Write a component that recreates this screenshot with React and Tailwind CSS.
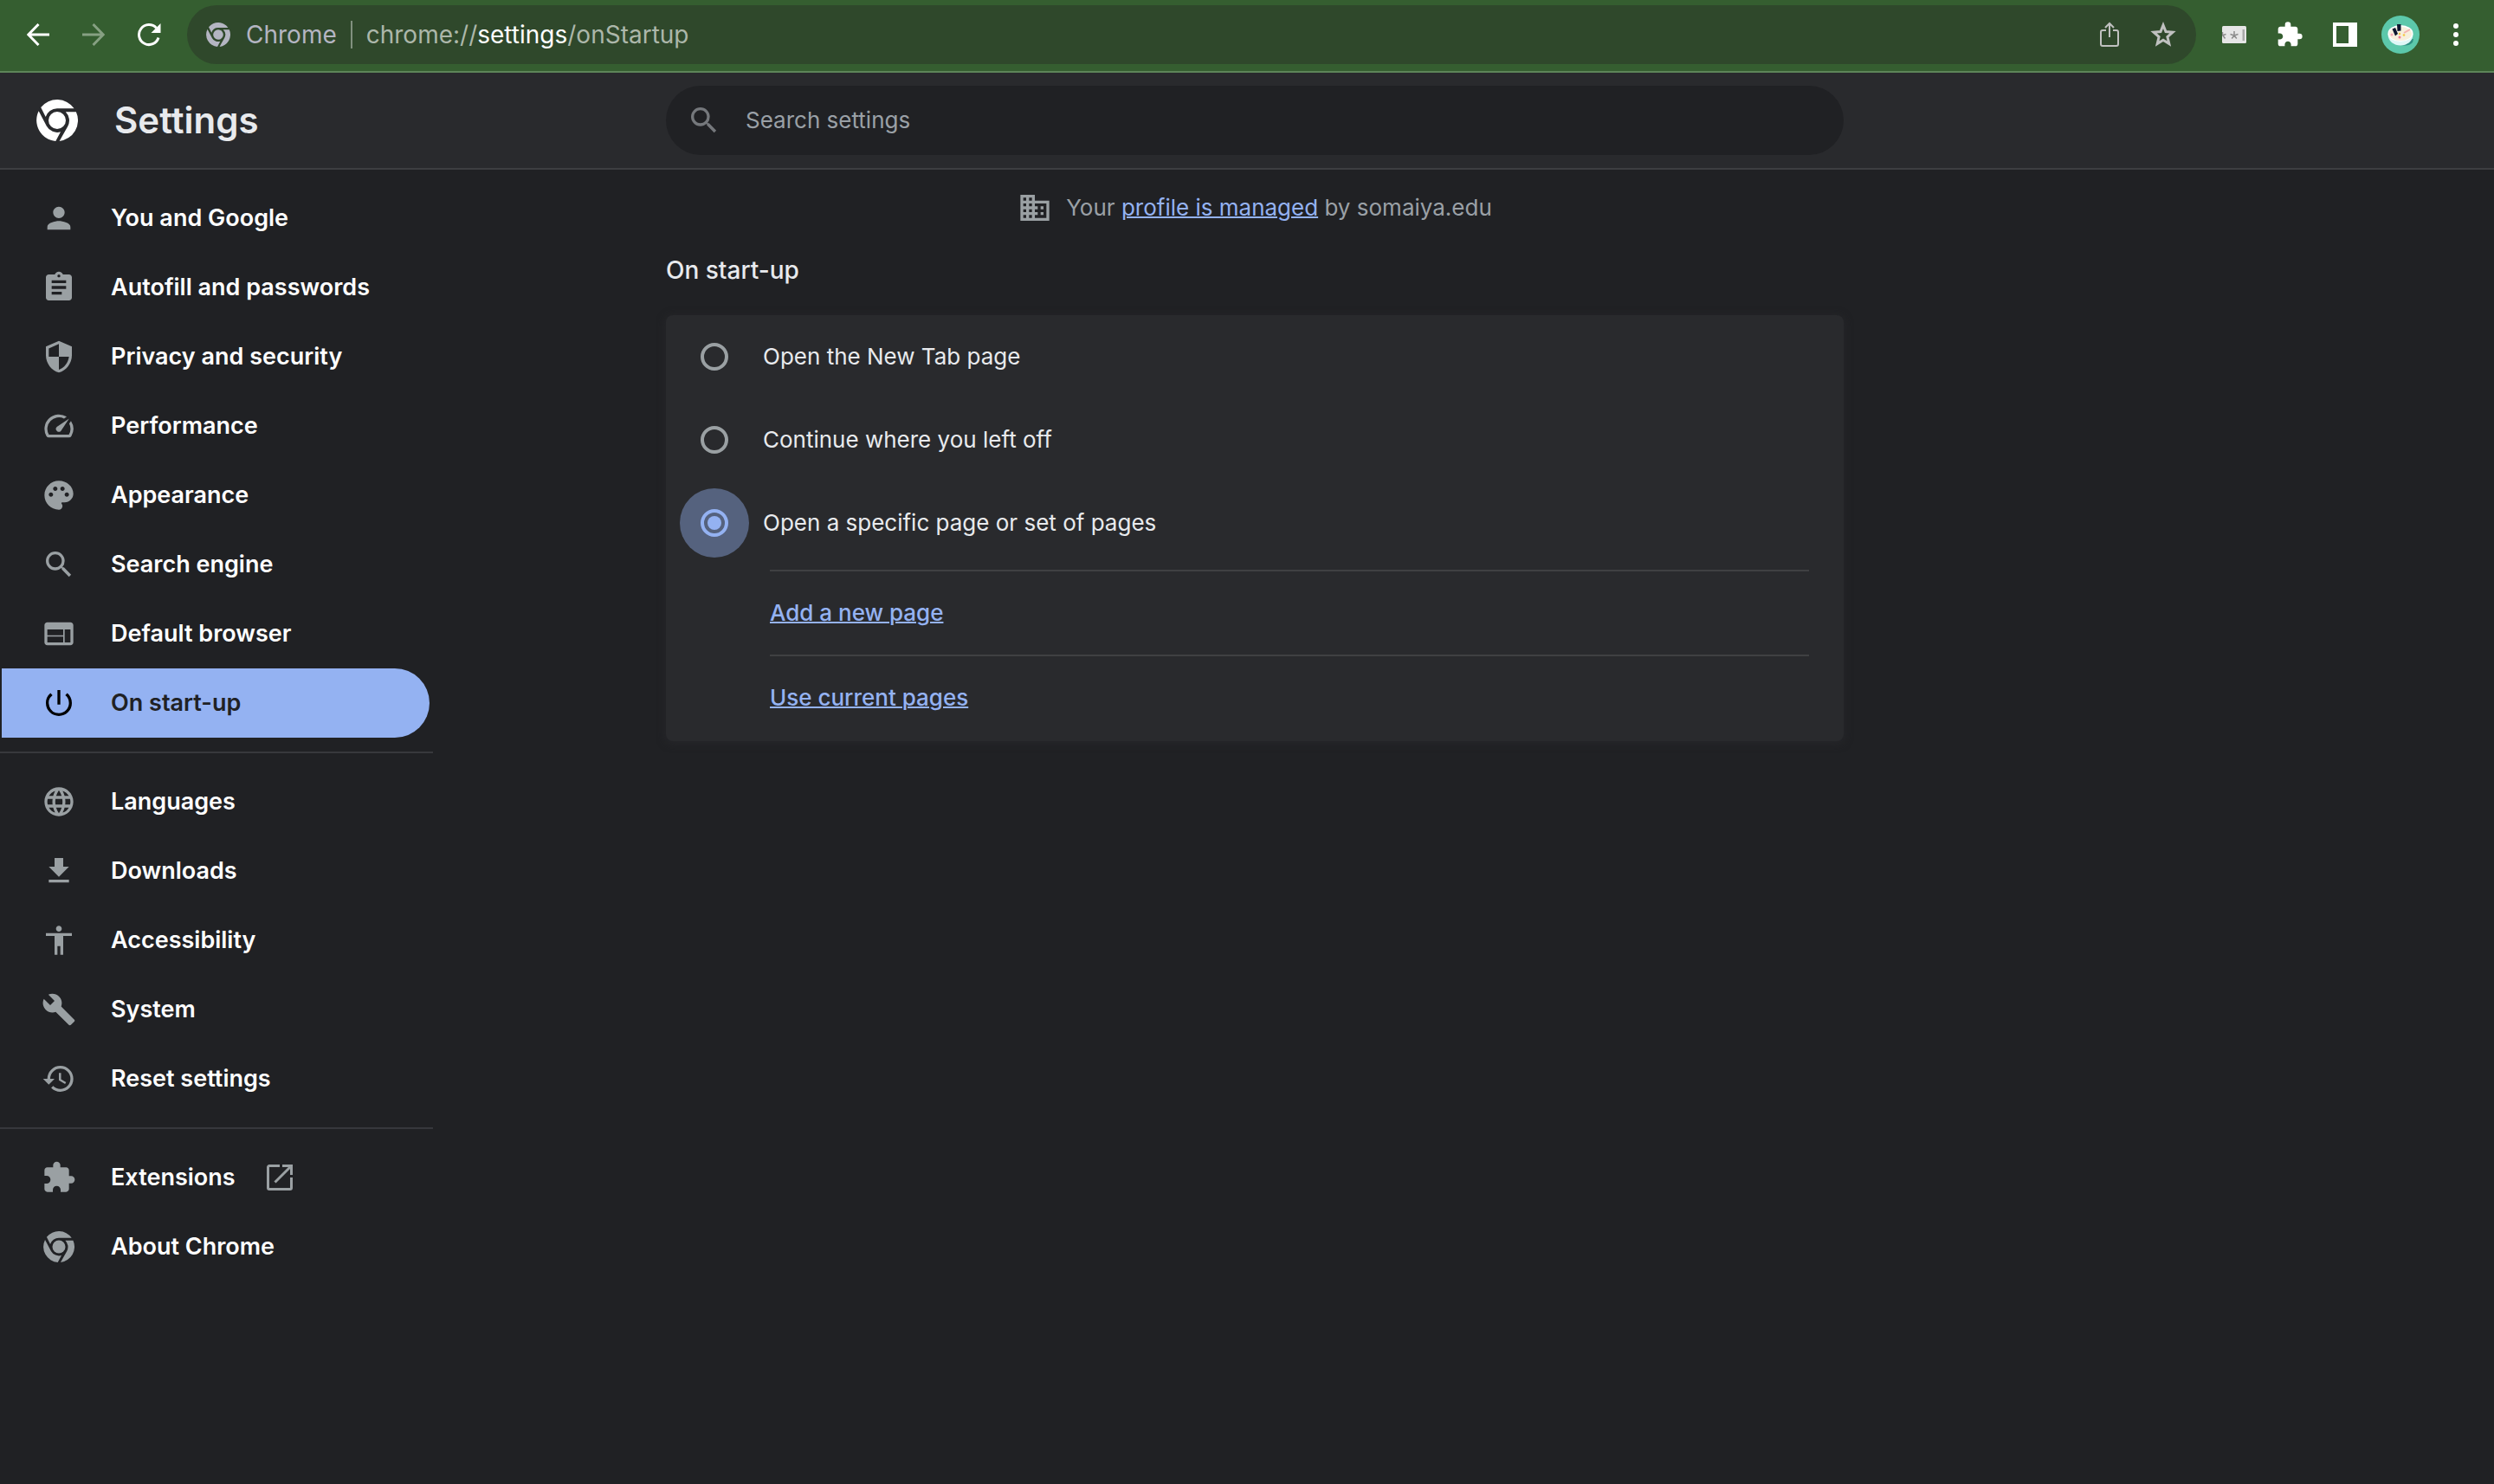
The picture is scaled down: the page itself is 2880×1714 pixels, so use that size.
import React, { useState } from "react";
import {
  MdPerson, MdAssignment, MdSpeed, MdPalette, MdSearch, MdWeb, MdPowerSettingsNew,
  MdLanguage, MdAccessibility, MdBuild, MdExtension, MdDomain,
} from "react-icons/md";

function ChromeMark({ className }) {
  return (
    <svg viewBox="0 0 48 48" className={className} fill="currentColor" aria-hidden="true">
      <circle cx="24" cy="24" r="10" />
      <path d="M5.2 9.1A24 24 0 0 1 43.6 10.2L24 10.2A13.9 13.9 0 0 0 10.7 20.1z" />
      <path d="M45.9 14.2A24 24 0 0 1 26.6 47.9L36.2 30.9A13.9 13.9 0 0 0 33.8 14.2z" />
      <path d="M2.7 13.2A24 24 0 0 0 22.3 47.9L28 37.3A13.9 13.9 0 0 1 11.9 30.7z" />
    </svg>
  );
}

function Shield({ className }) {
  return (
    <svg viewBox="0 0 24 24" className={className} fill="currentColor" fillRule="evenodd" aria-hidden="true">
      <path d="M12 1 3 5v6c0 5.55 3.84 10.74 9 12 5.16-1.26 9-6.45 9-12V5l-9-4zM12 12H5V6.3l7-3.11V12zm0 0h7c-.53 4.12-3.28 7.79-7 8.94V12z" />
    </svg>
  );
}

function Download({ className }) {
  return (
    <svg viewBox="0 0 24 24" className={className} fill="currentColor" aria-hidden="true">
      <path d="M19 9h-4V3H9v6H5l7 7 7-7zM5 18v2h14v-2H5z" />
    </svg>
  );
}

function Restore({ className }) {
  return (
    <svg viewBox="0 0 24 24" className={className} fill="currentColor" aria-hidden="true">
      <path d="M13 3a9 9 0 0 0-9 9H1l3.89 3.89.07.14L9 12H6a7 7 0 1 1 7 7c-1.93 0-3.68-.79-4.94-2.06l-1.42 1.42A8.95 8.95 0 0 0 13 21a9 9 0 0 0 0-18zm-1 5v5l4.28 2.54.72-1.21-3.5-2.08V8H12z" />
    </svg>
  );
}

function OpenOut({ className }) {
  return (
    <svg viewBox="0 0 30 30" className={className} fill="none" stroke="currentColor" strokeWidth="3" aria-hidden="true">
      <path d="M15 1.500H3A1.500 1.500 0 0 0 1.500 3V27A1.500 1.500 0 0 0 3 28.500H27A1.500 1.500 0 0 0 28.500 27V15" />
      <path d="M18 1.500H28.500V12M28 2 9.500 20.500" />
    </svg>
  );
}

function Avatar({ className }) {
  return (
    <svg viewBox="0 0 44 44" className={className} aria-hidden="true">
      <circle cx="22" cy="22" r="22" fill="#5cc8ab" />
      <path d="M20 33Q30 37 36 31L37 27L30 28z" fill="#2f8f83" />
      <path d="M7.500 21C7.500 39 36.500 39 36.500 21z" fill="#dff7f7" />
      <ellipse cx="22" cy="20.500" rx="14.500" ry="9.500" fill="#ffffff" />
      <ellipse cx="22" cy="21" rx="13" ry="8" fill="#f7efdc" />
      <path d="M12.500 15.500l3.500-1.500 3 7-3 2.500zM18 10h4.500v7.500l-4 .5z" fill="#0c1730" />
      <circle cx="12" cy="22" r="1.500" fill="#f6a9b8" />
      <circle cx="21" cy="25" r="1.500" fill="#f2798f" />
      <circle cx="26" cy="22.500" r="1.300" fill="#f5c842" />
      <circle cx="21" cy="21" r="1.200" fill="#f5c842" />
      <path d="M26 20l7-4" stroke="#f4b3b0" strokeWidth="2" />
    </svg>
  );
}

const groups = [
  [
    ["You and Google", MdPerson],
    ["Autofill and passwords", MdAssignment],
    ["Privacy and security", Shield],
    ["Performance", MdSpeed],
    ["Appearance", MdPalette],
    ["Search engine", MdSearch],
    ["Default browser", MdWeb],
    ["On start-up", MdPowerSettingsNew],
  ],
  [
    ["Languages", MdLanguage],
    ["Downloads", Download],
    ["Accessibility", MdAccessibility],
    ["System", MdBuild],
    ["Reset settings", Restore],
  ],
  [
    ["Extensions", MdExtension],
    ["About Chrome", ChromeMark],
  ],
];

const options = [
  "Open the New Tab page",
  "Continue where you left off",
  "Open a specific page or set of pages",
];

function Toolbar() {
  return (
    <div className="flex h-[84px] items-center border-b-2 border-[#5d8558] bg-[#355e30] pr-9 pl-6 pb-0.5 text-white">
      <button aria-label="Back" className="flex size-10 items-center justify-center">
        <svg viewBox="0 0 26 26" className="size-[26px]" fill="none" stroke="currentColor" strokeWidth="3" aria-hidden="true">
          <path d="M26 13H2M13.500 1 1.800 13 13.500 25" />
        </svg>
      </button>
      <button aria-label="Forward" className="ml-6 flex size-10 items-center justify-center text-[#86a082]">
        <svg viewBox="0 0 26 26" className="size-[26px]" fill="none" stroke="currentColor" strokeWidth="3" aria-hidden="true">
          <path d="M0 13H24M12.500 1 24.200 13 12.500 25" />
        </svg>
      </button>
      <button aria-label="Reload" className="ml-6 flex size-10 items-center justify-center">
        <svg viewBox="0 0 28 28" className="size-7" fill="none" aria-hidden="true">
          <path d="M25 17.500A11.500 11.500 0 1 1 22.500 6.300" stroke="currentColor" strokeWidth="3" />
          <path d="M27.500 1V12H16.500z" fill="currentColor" />
        </svg>
      </button>
      <div className="ml-6 flex h-[68px] flex-1 items-center rounded-full bg-[#2f482b] pr-5 pl-[22px] text-[28px]">
        <ChromeMark className="size-7 text-[#b4b5c2]" />
        <span className="ml-[18px] text-[#b4b5c2]">Chrome</span>
        <span className="mx-4 h-8 w-0.5 bg-[#81907f]" />
        <span className="flex-1 text-[#acb7aa]">
          chrome://<span className="text-white">settings</span>/onStartup
        </span>
        <button aria-label="Share" className="flex size-8 items-center justify-center text-[#c0c1c0]">
          <svg viewBox="0 0 24 30" className="h-[30px] w-6" fill="none" stroke="currentColor" strokeWidth="2" aria-hidden="true">
            <path d="M8 10H4A2 2 0 0 0 2 12V26A2 2 0 0 0 4 28H20A2 2 0 0 0 22 26V12A2 2 0 0 0 20 10H16M12 18V2M7 7 12 2 17 7" />
          </svg>
        </button>
        <button aria-label="Bookmark this tab" className="ml-7 flex size-9 items-center justify-center text-[#c0c1c0]">
          <svg viewBox="0 0 30 30" className="size-[30px]" fill="none" stroke="currentColor" strokeWidth="3" aria-hidden="true">
            <path d="M15 4 18 11.500 26 12.200 19.900 17.500 21.800 25.500 15 21.200 8.200 25.500 10.100 17.500 4 12.200 12 11.500z" />
          </svg>
        </button>
      </div>
      <button aria-label="Password extension" className="ml-[30px]">
        <svg viewBox="0 0 28 20" className="h-5 w-7" aria-hidden="true">
          <rect width="28" height="20" rx="1.500" fill="#e6e6e6" />
          <path d="M14 6V11M14 11 9.500 9.500M14 11 18.500 9.500M14 11 11.200 14.500M14 11 16.800 14.500M0 11 4.500 9.500M1 11 3.500 14.500M.5 11V7" stroke="#8c8c8c" strokeWidth="1.500" />
          <rect x="23.500" y="4" width="2.500" height="13" fill="#a9a9a9" />
        </svg>
      </button>
      <button aria-label="Extensions" className="ml-[34px]"><MdExtension className="size-8" /></button>
      <button aria-label="Side panel" className="ml-[34px]">
        <svg viewBox="0 0 28 28" className="size-7" fill="currentColor" fillRule="evenodd" aria-hidden="true">
          <path d="M0 0H28V28H0zM4 4V24H18V4z" />
        </svg>
      </button>
      <button aria-label="Profile" className="ml-7"><Avatar className="size-11" /></button>
      <button aria-label="Menu" className="ml-[34px]">
        <svg viewBox="0 0 16 28" className="h-7 w-4" fill="currentColor" aria-hidden="true">
          <circle cx="8" cy="4" r="3" /><circle cx="8" cy="14" r="3" /><circle cx="8" cy="24" r="3" />
        </svg>
      </button>
    </div>
  );
}

function NavItem({ label, Icon }) {
  const active = label === "On start-up";
  const tone = active ? "bg-[#94b2f2] text-[#202124]" : "text-white";
  const iconTone = active ? "text-black" : "text-[#9aa0a3]";
  return (
    <a href="#" aria-current={active ? "page" : undefined} className={"ml-0.5 mr-1 flex h-20 items-center rounded-r-full pl-[46px] text-[27px] font-semibold " + tone}>
      <span className={"flex size-10 items-center justify-center " + iconTone}>
        <Icon className={Icon === ChromeMark ? "size-9" : "size-10"} />
      </span>
      <span className="ml-10">{label}</span>
      {label === "Extensions" && <OpenOut className="ml-9 size-[30px] text-[#9aa0a3]" />}
    </a>
  );
}

export default function App() {
  const [choice, setChoice] = useState(2);
  return (
    <div className="flex min-h-screen flex-col bg-[#202124] font-['Inter','Liberation_Sans',sans-serif] text-[26px] leading-10 text-[#e8eaed]">
      <Toolbar />
      <header className="flex h-28 items-center border-b-2 border-[#3d3e41] bg-[#292a2d]">
        <div className="flex w-[532px] shrink-0 items-center pl-[42px]">
          <ChromeMark className="size-12 text-white" />
          <h1 className="ml-[42px] text-[42px] font-semibold">Settings</h1>
        </div>
        <div className="flex flex-1 justify-center">
          <label className="flex h-20 w-full max-w-[1360px] items-center rounded-full bg-[#202124] pl-6">
            <MdSearch className="size-10 text-[#75787c]" />
            <input type="search" aria-label="Search settings" placeholder="Search settings" className="ml-7 flex-1 bg-transparent outline-none placeholder:text-[#9aa0a6]" />
          </label>
        </div>
        <div className="w-[514px] shrink-0" />
      </header>
      <div className="flex flex-1">
        <div className="w-[532px] shrink-0 pt-4">
          <nav className="w-[500px]">
            {groups.map((items, i) => (
              <div key={i}>
                {i > 0 && <hr className="my-4 border-t-2 border-[#37383c]" />}
                {items.map(([label, Icon]) => <NavItem key={label} label={label} Icon={Icon} />)}
              </div>
            ))}
          </nav>
        </div>
        <main className="flex flex-1 justify-center">
          <div className="w-full max-w-[1360px] pt-6">
            <p className="flex items-center justify-center text-[#9aa0a6]">
              <MdDomain className="mr-4 size-10 text-[#9aa0a3]" />
              <span>Your <a href="#" className="text-[#94b2f2] underline decoration-2">profile is managed</a> by somaiya.edu</span>
            </p>
            <h2 className="mt-8 text-[28px] font-medium">On start-up</h2>
            <section className="mt-8 rounded-lg bg-[#292a2d] pb-0.5 shadow-[0_2px_8px_2px_rgba(41,42,45,0.5)]">
              {options.map((label, i) => (
                <label key={label} className="flex h-24 items-center pl-4">
                  <span className={"flex size-20 items-center justify-center rounded-full " + (choice === i ? "bg-[#55627e]" : "")}>
                    <input
                      type="radio"
                      name="startup"
                      checked={choice === i}
                      onChange={() => setChoice(i)}
                      className="flex size-8 appearance-none items-center justify-center rounded-full border-4 border-[#9aa0a3] checked:border-[#94b2f2] checked:before:size-4 checked:before:rounded-full checked:before:bg-[#94b2f2]"
                    />
                  </span>
                  <span className="ml-4">{label}</span>
                </label>
              ))}
              <div className="mt-1.5 mr-10 ml-30 font-medium text-[#94b2f2]">
                <div className="flex h-[98px] items-center border-t-2 border-[#3f4042]"><a href="#" className="underline decoration-2">Add a new page</a></div>
                <div className="flex h-[98px] items-center border-t-2 border-[#3f4042]"><a href="#" className="underline decoration-2">Use current pages</a></div>
              </div>
            </section>
          </div>
        </main>
        <div className="w-[514px] shrink-0" />
      </div>
    </div>
  );
}
